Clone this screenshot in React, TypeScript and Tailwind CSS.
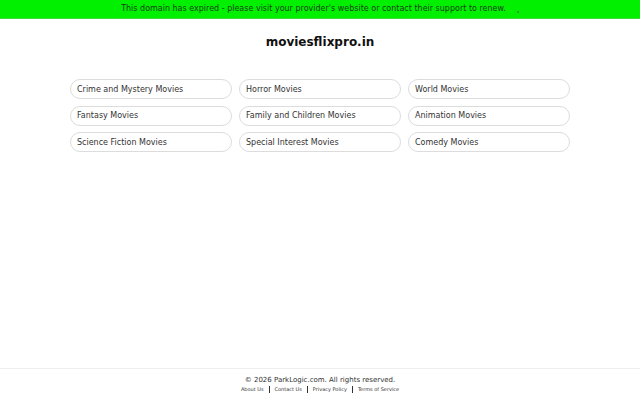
import React from "react";

const cats = [
  "Crime and Mystery Movies",
  "Horror Movies",
  "World Movies",
  "Fantasy Movies",
  "Family and Children Movies",
  "Animation Movies",
  "Science Fiction Movies",
  "Special Interest Movies",
  "Comedy Movies",
];

export default function App() {
  return (
    <div className="w-[640px] h-[400px] bg-white flex flex-col text-[#222]" style={{ fontFamily: '"DejaVu Sans", Verdana, sans-serif' }}>
      <div className="h-[19px] bg-[#00f000] border-b border-[#3ce03c] flex items-center justify-center gap-[11px] text-[8px] text-[#1a3d1a]">
        <span>This domain has expired - please visit your provider's website or contact their support to renew.</span>
        <span className="w-[2px] h-[2px] rounded-full bg-[#3a8a3a] mt-[5px]" />
      </div>
      <div className="flex justify-center pt-[14px] h-[60px]">
        <h1 className="text-[12px] font-bold text-[#111]">moviesflixpro.in</h1>
      </div>
      <div className="grid grid-cols-3 gap-x-[7px] gap-y-[6.5px] mx-[70px]">
        {cats.map((c) => (
          <div key={c} className="h-[20px] rounded-full border border-[#dcdcdc] flex items-center px-[6px] pt-[1px] text-[8px] text-[#333]">
            {c}
          </div>
        ))}
      </div>
      <div className="flex-1" />
      <div className="border-t border-[#eee] h-[32px] flex flex-col items-center pt-[7px]">
        <div className="text-[7px] text-[#333] leading-[9px]">© 2026 ParkLogic.com. All rights reserved.</div>
        <div className="flex items-center text-[5px] text-[#333] leading-[7px] mt-[1px]">
          <span>About Us</span>
          <span className="mx-[5px] w-px h-[7px] bg-[#333]" />
          <span>Contact Us</span>
          <span className="mx-[5px] w-px h-[7px] bg-[#333]" />
          <span>Privacy Policy</span>
          <span className="mx-[5px] w-px h-[7px] bg-[#333]" />
          <span>Terms of Service</span>
        </div>
      </div>
    </div>
  );
}
